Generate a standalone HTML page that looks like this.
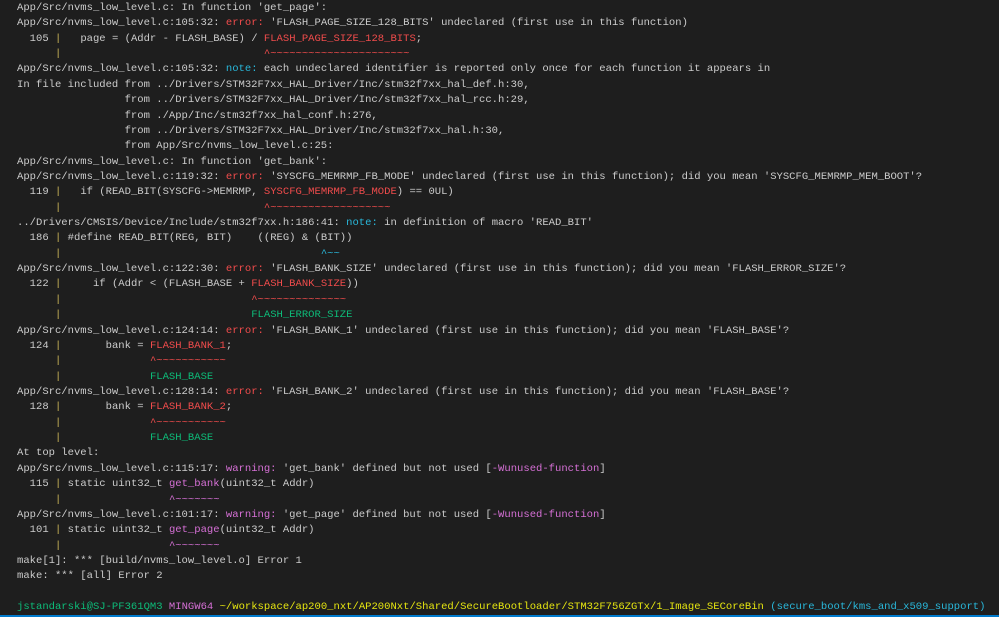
<!DOCTYPE html>
<html><head><meta charset="utf-8"><style>
html,body{margin:0;padding:0;background:#1e1e1e;width:999px;height:617px;overflow:hidden}
pre{margin:0;position:absolute;left:17px;top:1px;font-family:"Liberation Mono",monospace;font-size:10.55px;line-height:15.36px;color:#cccccc;white-space:pre}
.r{color:#f14c4c}.c{color:#29b8db}.g{color:#0dbc79}.m{color:#d670d6}.y{color:#e5e510}.b{color:#c9b458}
.bar{position:absolute;left:0;bottom:0;width:999px;height:2px;background:#007acc}
</style></head><body>
<pre>App/Src/nvms_low_level.c: In function 'get_page':
App/Src/nvms_low_level.c:105:32: <span class="r">error: </span>'FLASH_PAGE_SIZE_128_BITS' undeclared (first use in this function)
  105 <span class="b">|</span>   page = (Addr - FLASH_BASE) / <span class="r">FLASH_PAGE_SIZE_128_BITS</span>;
      <span class="b">|</span>                                <span class="r">^~~~~~~~~~~~~~~~~~~~~~~</span>
App/Src/nvms_low_level.c:105:32: <span class="c">note: </span>each undeclared identifier is reported only once for each function it appears in
In file included from ../Drivers/STM32F7xx_HAL_Driver/Inc/stm32f7xx_hal_def.h:30,
                 from ../Drivers/STM32F7xx_HAL_Driver/Inc/stm32f7xx_hal_rcc.h:29,
                 from ./App/Inc/stm32f7xx_hal_conf.h:276,
                 from ../Drivers/STM32F7xx_HAL_Driver/Inc/stm32f7xx_hal.h:30,
                 from App/Src/nvms_low_level.c:25:
App/Src/nvms_low_level.c: In function 'get_bank':
App/Src/nvms_low_level.c:119:32: <span class="r">error: </span>'SYSCFG_MEMRMP_FB_MODE' undeclared (first use in this function); did you mean 'SYSCFG_MEMRMP_MEM_BOOT'?
  119 <span class="b">|</span>   if (READ_BIT(SYSCFG-&gt;MEMRMP, <span class="r">SYSCFG_MEMRMP_FB_MODE</span>) == 0UL)
      <span class="b">|</span>                                <span class="r">^~~~~~~~~~~~~~~~~~~~</span>
../Drivers/CMSIS/Device/Include/stm32f7xx.h:186:41: <span class="c">note: </span>in definition of macro 'READ_BIT'
  186 <span class="b">|</span> #define READ_BIT(REG, BIT)    ((REG) &amp; (BIT))
      <span class="b">|</span>                                         <span class="c">^~~</span>
App/Src/nvms_low_level.c:122:30: <span class="r">error: </span>'FLASH_BANK_SIZE' undeclared (first use in this function); did you mean 'FLASH_ERROR_SIZE'?
  122 <span class="b">|</span>     if (Addr &lt; (FLASH_BASE + <span class="r">FLASH_BANK_SIZE</span>))
      <span class="b">|</span>                              <span class="r">^~~~~~~~~~~~~~~</span>
      <span class="b">|</span>                              <span class="g">FLASH_ERROR_SIZE</span>
App/Src/nvms_low_level.c:124:14: <span class="r">error: </span>'FLASH_BANK_1' undeclared (first use in this function); did you mean 'FLASH_BASE'?
  124 <span class="b">|</span>       bank = <span class="r">FLASH_BANK_1</span>;
      <span class="b">|</span>              <span class="r">^~~~~~~~~~~~</span>
      <span class="b">|</span>              <span class="g">FLASH_BASE</span>
App/Src/nvms_low_level.c:128:14: <span class="r">error: </span>'FLASH_BANK_2' undeclared (first use in this function); did you mean 'FLASH_BASE'?
  128 <span class="b">|</span>       bank = <span class="r">FLASH_BANK_2</span>;
      <span class="b">|</span>              <span class="r">^~~~~~~~~~~~</span>
      <span class="b">|</span>              <span class="g">FLASH_BASE</span>
At top level:
App/Src/nvms_low_level.c:115:17: <span class="m">warning: </span>'get_bank' defined but not used [<span class="m">-Wunused-function</span>]
  115 <span class="b">|</span> static uint32_t <span class="m">get_bank</span>(uint32_t Addr)
      <span class="b">|</span>                 <span class="m">^~~~~~~~</span>
App/Src/nvms_low_level.c:101:17: <span class="m">warning: </span>'get_page' defined but not used [<span class="m">-Wunused-function</span>]
  101 <span class="b">|</span> static uint32_t <span class="m">get_page</span>(uint32_t Addr)
      <span class="b">|</span>                 <span class="m">^~~~~~~~</span>
make[1]: *** [build/nvms_low_level.o] Error 1
make: *** [all] Error 2

<span class="g">jstandarski@SJ-PF361QM3</span> <span class="m">MINGW64</span> <span class="y">~/workspace/ap200_nxt/AP200Nxt/Shared/SecureBootloader/STM32F756ZGTx/1_Image_SECoreBin</span> <span class="c">(secure_boot/kms_and_x509_support)</span></pre>
<div class="bar"></div>
</body></html>
